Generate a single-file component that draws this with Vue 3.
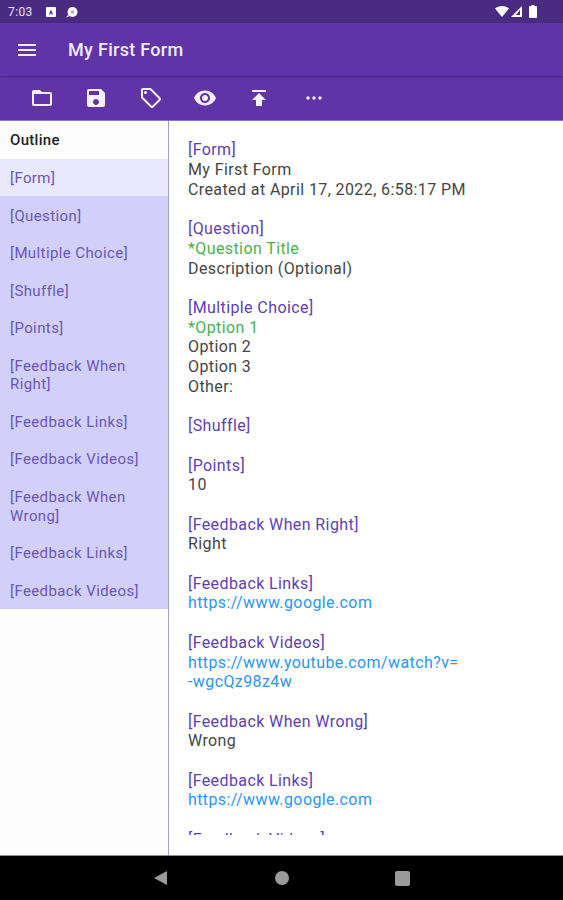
<template>
  <div class="screen">
    <!-- Status bar -->
    <div class="status-bar">
      <span class="time">7:03</span>
      <svg class="status-icon" viewBox="0 0 12 12" width="12" height="12">
        <path d="M2 1h8a1 1 0 0 1 1 1v8a1 1 0 0 1-1 1H2a1 1 0 0 1-1-1V2a1 1 0 0 1 1-1zm4 2.5L4 8.5h1.2l.3-1h1l.3 1H8L6 3.5z" fill="#fff" fill-rule="evenodd" />
      </svg>
      <svg class="status-icon chat" viewBox="0 0 14 12" width="14" height="12">
        <circle cx="7.5" cy="6" r="5" fill="#fff" />
        <circle cx="7.5" cy="6" r="1.8" fill="#b9abd6" />
        <path d="M3 9l-2 2.5L5 10z" fill="#fff" />
      </svg>
      <div class="status-right">
        <svg viewBox="0 0 14 11" width="14" height="11">
          <path d="M0 2.4C1.8.9 4.2 0 7 0s5.200.9 7 2.400L7 11z" fill="#fff" />
        </svg>
        <svg viewBox="0 0 11 11" width="11" height="11">
          <path d="M11 0v11H0z" fill="#fff" />
          <path d="M9 4v5H5z" fill="#4a2b82" />
        </svg>
        <svg class="battery" viewBox="0 0 8 13" width="8" height="13">
          <path d="M2.500 0h3v1H7a1 1 0 0 1 1 1v10a1 1 0 0 1-1 1H1a1 1 0 0 1-1-1V2a1 1 0 0 1 1-1h1.500z" fill="#fff" />
        </svg>
      </div>
    </div>

    <!-- App bar -->
    <header class="app-bar">
      <svg class="menu-icon" viewBox="0 0 24 24" width="24" height="24">
        <path d="M3 18h18v-2H3v2zm0-5h18v-2H3v2zm0-7v2h18V6H3z" fill="#f1ecfa" />
      </svg>
      <h1 class="title">My First Form</h1>
    </header>

    <!-- Toolbar -->
    <nav class="toolbar">
      <button v-for="icon in toolIcons" :key="icon.name" class="tool-btn" :aria-label="icon.name">
        <svg viewBox="0 0 24 24" :width="icon.size" :height="icon.size">
          <path :d="icon.d" fill="#f5f1fb" />
          <circle v-for="(c, i) in icon.circles" :key="i" :cx="c[0]" :cy="c[1]" :r="c[2]" fill="#f5f1fb" />
        </svg>
      </button>
    </nav>

    <main class="body">
      <!-- Outline -->
      <aside class="sidebar">
        <div class="outline-title">Outline</div>
        <div class="outline-list">
          <div
            v-for="(item, i) in outline"
            :key="i"
            class="outline-item"
            :class="{ active: i === 0 }"
          >{{ item }}</div>
        </div>
      </aside>

      <!-- Preview -->
      <section class="preview">
        <div class="preview-scroll">
          <div v-for="(block, i) in blocks" :key="i" class="block">
            <div class="tag">{{ block.tag }}</div>
            <div v-for="(line, j) in block.lines" :key="j" :class="line.kind">{{ line.text }}</div>
          </div>
        </div>
      </section>
    </main>

    <!-- Android nav bar -->
    <footer class="nav-bar">
      <svg viewBox="0 0 16 16" width="16" height="16">
        <path d="M14 1v14L1 8z" fill="#9a9a9a" />
      </svg>
      <span class="nav-circle"></span>
      <span class="nav-square"></span>
    </footer>
  </div>
</template>

<script setup>
const toolIcons = [
  {
    name: 'Open',
    size: 24,
    d: 'M20 6h-8l-2-2H4c-1.1 0-1.99.9-1.99 2L2 18c0 1.1.9 2 2 2h16c1.1 0 2-.9 2-2V8c0-1.1-.9-2-2-2zm0 12H4V8h16v10z'
  },
  {
    name: 'Save',
    size: 24,
    d: 'M17 3H5c-1.11 0-2 .9-2 2v14c0 1.1.89 2 2 2h14c1.1 0 2-.9 2-2V7l-4-4zm-5 16c-1.66 0-3-1.34-3-3s1.34-3 3-3 3 1.34 3 3-1.34 3-3 3zm3-10H5V5h10v4z'
  },
  {
    name: 'Tag',
    size: 24,
    d: 'M21.41 11.58l-9-9C12.05 2.22 11.55 2 11 2H4c-1.1 0-2 .9-2 2v7c0 .55.22 1.05.59 1.42l9 9c.36.36.86.58 1.41.58s1.05-.22 1.41-.59l7-7c.37-.36.59-.86.59-1.41s-.23-1.06-.59-1.42zM13 20.01L4 11V4h7v-.01l9 9-7 7.020z',
    circles: [[6.5, 6.5, 1.5]]
  },
  {
    name: 'Preview',
    size: 24,
    d: 'M12 4.500C7 4.500 2.730 7.610 1 12c1.730 4.390 6 7.500 11 7.500s9.270-3.110 11-7.500c-1.730-4.390-6-7.500-11-7.500zM12 17c-2.760 0-5-2.240-5-5s2.240-5 5-5 5 2.240 5 5-2.240 5-5 5zm0-8c-1.660 0-3 1.340-3 3s1.340 3 3 3 3-1.340 3-3-1.340-3-3-3z'
  },
  {
    name: 'Publish',
    size: 24,
    d: 'M5 4v2h14V4H5zm0 10h4v6h6v-6h4l-7-7-7 7z'
  },
  {
    name: 'More',
    size: 24,
    d: '',
    circles: [[6, 12, 1.7], [12, 12, 1.7], [18, 12, 1.7]]
  }
]

const outline = [
  '[Form]',
  '[Question]',
  '[Multiple Choice]',
  '[Shuffle]',
  '[Points]',
  '[Feedback When Right]',
  '[Feedback Links]',
  '[Feedback Videos]',
  '[Feedback When Wrong]',
  '[Feedback Links]',
  '[Feedback Videos]'
]

const plain = (text) => ({ kind: 'plain', text })
const green = (text) => ({ kind: 'required', text })
const link = (text) => ({ kind: 'link', text })

const blocks = [
  { tag: '[Form]', lines: [plain('My First Form'), plain('Created at April 17, 2022, 6:58:17 PM')] },
  { tag: '[Question]', lines: [green('*Question Title'), plain('Description (Optional)')] },
  {
    tag: '[Multiple Choice]',
    lines: [green('*Option 1'), plain('Option 2'), plain('Option 3'), plain('Other:')]
  },
  { tag: '[Shuffle]', lines: [] },
  { tag: '[Points]', lines: [plain('10')] },
  { tag: '[Feedback When Right]', lines: [plain('Right')] },
  { tag: '[Feedback Links]', lines: [link('https://www.google.com')] },
  {
    tag: '[Feedback Videos]',
    lines: [link('https://www.youtube.com/watch?v='), link('-wgcQz98z4w')]
  },
  { tag: '[Feedback When Wrong]', lines: [plain('Wrong')] },
  { tag: '[Feedback Links]', lines: [link('https://www.google.com')] },
  { tag: '[Feedback Videos]', lines: [] }
]
</script>

<style scoped>
.screen {
  width: 563px;
  height: 900px;
  display: flex;
  flex-direction: column;
  font-family: Roboto, sans-serif;
  overflow: hidden;
  background: #fff;
}

.status-bar {
  height: 23px;
  flex: none;
  display: flex;
  align-items: center;
  padding: 0 26px 0 8px;
  background: #4a2b82;
  color: #e9e4f3;
  font-size: 12px;
  letter-spacing: 0.4px;
}

.time {
  margin-right: 12px;
}

.status-icon {
  margin-right: 7px;
}

.status-icon.chat {
  margin-left: 1px;
}

.status-right {
  margin-left: auto;
  display: flex;
  align-items: center;
  gap: 2px;
}

.battery {
  margin-left: 5px;
}

.app-bar {
  height: 53px;
  flex: none;
  display: flex;
  align-items: center;
  padding-left: 15px;
  background: #6034a6;
  box-shadow: 0 1px 2px rgba(40, 15, 90, 0.45);
  position: relative;
}

.title {
  margin: 0 0 0 29px;
  font-size: 18px;
  font-weight: 500;
  letter-spacing: 0.3px;
  color: #f1ecfa;
}

.toolbar {
  height: 44px;
  flex: none;
  display: flex;
  align-items: center;
  padding-left: 15px;
  background: #6034a6;
}

.tool-btn {
  width: 54.3px;
  height: 44px;
  padding: 0;
  border: none;
  background: transparent;
  display: flex;
  align-items: center;
  justify-content: center;
}

.body {
  flex: 1;
  min-height: 0;
  display: flex;
  border-top: 1px solid #8b74cc;
}

.sidebar {
  width: 168px;
  flex: none;
  background: #fdfdfe;
  border-right: 1.5px solid #a49fc4;
}

.outline-title {
  height: 38px;
  display: flex;
  align-items: center;
  padding-left: 10px;
  font-size: 15px;
  font-weight: 500;
  letter-spacing: 0.3px;
  color: #222;
}

.outline-list {
  background: #d2d0fb;
}

.outline-item {
  padding: 10.2px 10px 8.55px;
  font-size: 15px;
  line-height: 18.75px;
  letter-spacing: 0.4px;
  color: #6c55b5;
}

.outline-item.active {
  background: #e9e8fd;
}

.preview {
  flex: 1;
  min-width: 0;
  padding: 19.4px 19px 19.6px 19px;
  background: #fff;
}

.preview-scroll {
  height: 100%;
  overflow: hidden;
  font-size: 16px;
  line-height: 19.7px;
  letter-spacing: 0.4px;
}

.block {
  margin-bottom: 19.7px;
}

.tag {
  color: #5e3fb0;
}

.plain {
  color: #454545;
}

.required {
  color: #4caf50;
}

.link {
  color: #2b96ee;
}

.nav-bar {
  height: 45px;
  flex: none;
  display: flex;
  align-items: center;
  justify-content: center;
  gap: 106px;
  background: #000;
  border-top: 1px solid #8f8f8f;
  box-sizing: border-box;
}

.nav-circle {
  width: 14px;
  height: 14px;
  border-radius: 50%;
  background: #9a9a9a;
}

.nav-square {
  width: 15px;
  height: 15px;
  border-radius: 2px;
  background: #9a9a9a;
}
</style>

<style>
body {
  margin: 0;
}
</style>
